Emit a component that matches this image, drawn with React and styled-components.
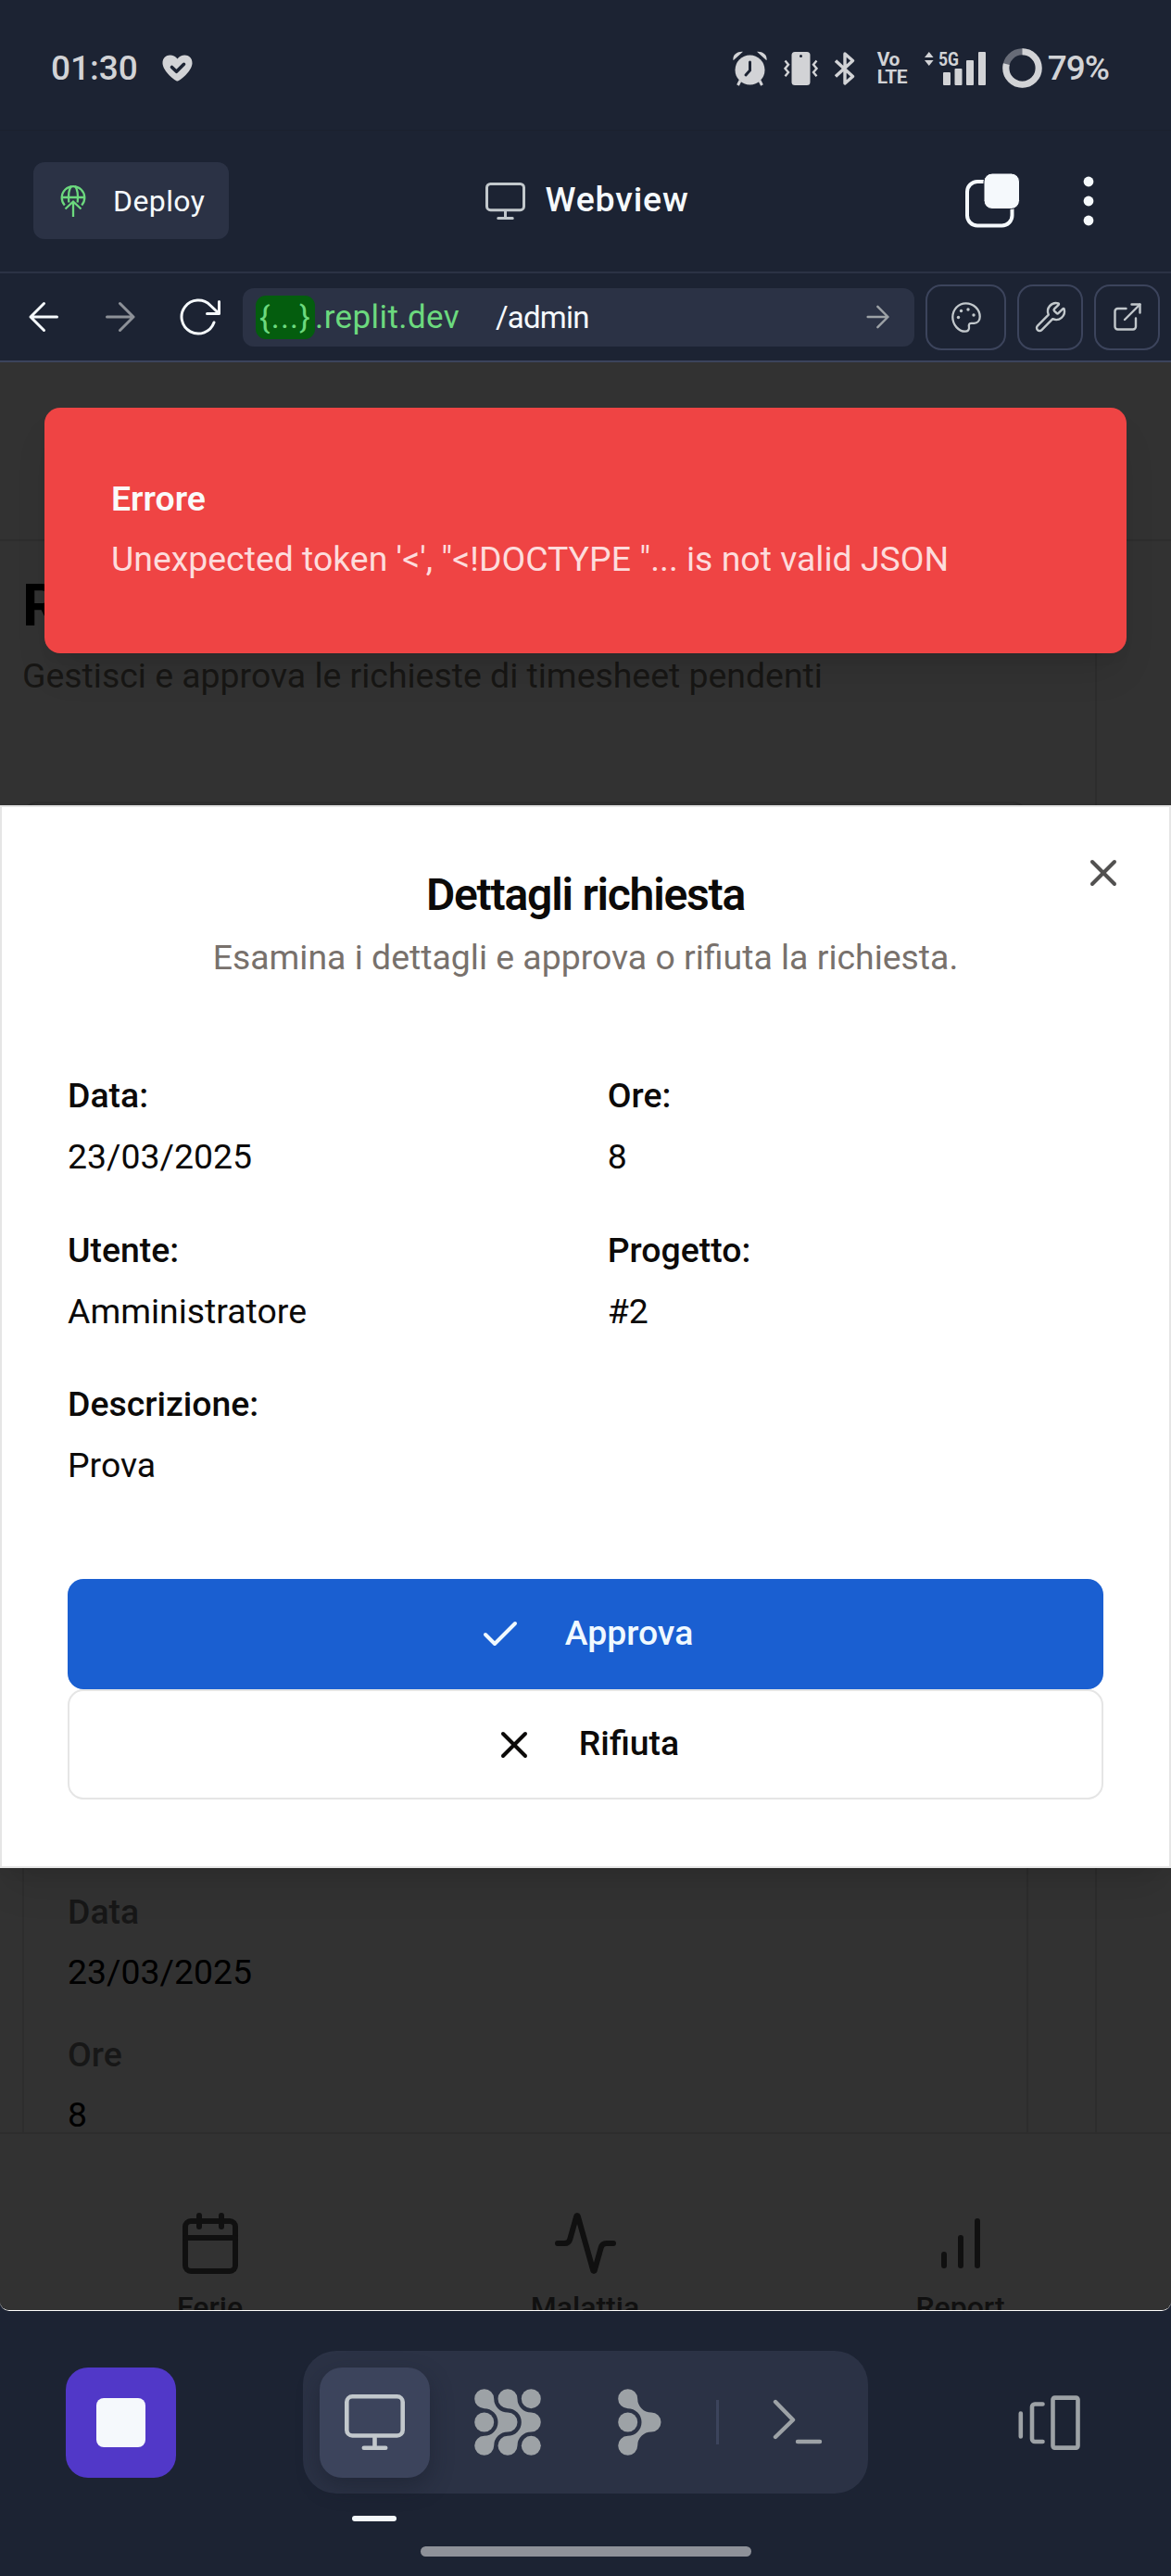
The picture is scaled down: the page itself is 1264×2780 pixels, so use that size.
import React from "react";
import styled, { createGlobalStyle, css } from "styled-components";
import { Wrench, ExternalLink, X, Check, Calendar, Activity } from "lucide-react";

const c = {
  bg: "#1c2333",
  surface: "#2b3245",
  raised: "#3c445c",
  text: "#f5f9fc",
  dim: "#c2c8cc",
  dimmer: "#9da2a6",
  status: "#d2d3d6",
  green: "#6cd97e",
  page: "#323232",
  pageLine: "#2d2d2d",
};

const GlobalStyle = createGlobalStyle`
  *, *::before, *::after { box-sizing: border-box; }
  body { margin: 0; background: ${c.bg}; font-family: Roboto, "Liberation Sans", sans-serif; }
  svg { display: block; flex: none; }
  h1, h2, p, dl, dt, dd { margin: 0; font-weight: 400; }
  button { font: inherit; margin: 0; padding: 0; border: 0; background: none; color: inherit; }
`;

const Screen = styled.div`
  width: 1264px;
  height: 2780px;
  display: flex;
  flex-direction: column;
  background: ${c.bg};
  overflow: hidden;
`;

/* ---------- system status bar ---------- */

const StatusBar = styled.div`
  height: 141px;
  padding: 7px 67px 0 55px;
  border-bottom: 1px solid #1a202e;
  display: flex;
  align-items: center;
  justify-content: space-between;
  color: ${c.status};
`;

const StatusGroup = styled.div`
  display: flex;
  align-items: center;
  gap: ${(p) => p.$gap || 0}px;
`;

const StatusText = styled.span`
  font-size: 37px;
  line-height: 44px;
  font-weight: 500;
  letter-spacing: ${(p) => p.$track || 0}px;
`;

const NetworkLabel = styled.span`
  display: flex;
  flex-direction: column;
  width: 33px;
  font-size: 21px;
  line-height: 19px;
  font-weight: 700;
  letter-spacing: -0.5px;
`;

/* ---------- app header ---------- */

const Header = styled.header`
  height: 154px;
  padding: 0 34px 1px 36px;
  border-bottom: 2px solid ${c.surface};
  display: grid;
  grid-template-columns: 1fr auto 1fr;
  align-items: center;
`;

const DeployButton = styled.button`
  justify-self: start;
  width: 211px;
  height: 83px;
  padding-left: 29px;
  border-radius: 12px;
  background: ${c.surface};
  color: ${c.text};
  display: flex;
  align-items: center;
  gap: 29px;
  font-size: 32px;
  letter-spacing: 0.4px;
`;

const HeaderTitle = styled.div`
  display: flex;
  align-items: center;
  gap: 21px;
  margin-right: -2px;
  color: ${c.text};
  font-size: 37.5px;
  font-weight: 500;
  letter-spacing: 0.8px;
`;

const TitleText = styled.span`
  margin-bottom: 4px;
`;

const HeaderActions = styled.div`
  justify-self: end;
  display: flex;
  align-items: center;
  gap: 68px;
  margin-right: 49px;
`;

/* ---------- address bar ---------- */

const AddressBar = styled.div`
  height: 96px;
  padding: 0 12px 0 30px;
  border-bottom: 2px solid ${c.raised};
  display: flex;
  align-items: center;
`;

const NavButtons = styled.div`
  display: flex;
  align-items: center;
  gap: 48px;
  margin-right: 23px;
`;

const UrlField = styled.div`
  width: 726px;
  height: 63px;
  padding: 0 27px 0 14px;
  border-radius: 12px;
  background: ${c.surface};
  display: flex;
  align-items: center;
  font-size: 35px;
  color: ${c.text};
`;

const HostBadge = styled.span`
  width: 64px;
  height: 47px;
  border-radius: 11px;
  background: #045d0e;
  color: ${c.green};
  display: flex;
  align-items: center;
  justify-content: center;
  font-size: 34px;
  letter-spacing: 1.2px;
`;

const Host = styled.span`
  color: ${c.green};
  width: 195px;
  letter-spacing: 0.4px;
`;

const Path = styled.span`
  flex: 1;
  font-size: 33px;
  letter-spacing: -0.8px;
`;

const ToolButtons = styled.div`
  display: flex;
  gap: 12px;
  margin-left: 12px;
  color: ${c.dim};
`;

const ToolButton = styled.button`
  width: ${(p) => p.$w || 71}px;
  height: 71px;
  border: 2px solid ${c.raised};
  border-radius: 17px;
  display: flex;
  align-items: center;
  justify-content: center;
`;

/* ---------- web page under the modal ---------- */

const Viewport = styled.main`
  position: relative;
  height: 2103px;
  background: ${c.page};
  border-bottom: 1px solid #ffffff;
  border-radius: 0 0 10px 10px;
  overflow: hidden;
  color: #000;
`;

const PageHeader = styled.div`
  height: 193px;
  border-bottom: 2px solid ${c.pageLine};
`;

const PageBody = styled.div`
  height: 1717px;
  width: 1184px;
  padding: 34px 72px 0 24px;
  border-right: 2px solid ${c.pageLine};
  overflow: hidden;
  display: flex;
  flex-direction: column;
`;

const PageTitle = styled.h1`
  font-size: 63px;
  line-height: 72px;
  font-weight: 700;
`;

const PageSubtitle = styled.p`
  margin-top: 13px;
  font-size: 37.4px;
  line-height: 53px;
  color: #171614;
  white-space: nowrap;
`;

const RequestCard = styled.div`
  flex: 1;
  margin-top: 109px;
  padding: 1170px 0 0 47px;
  border: 2px solid ${c.pageLine};
  border-bottom: 0;
  border-radius: 17px 17px 0 0;
  font-size: 37.4px;
  line-height: 53px;
`;

const CardEntry = styled.dl`
  margin-bottom: 36px;
  dt { color: #171717; font-weight: 500; margin-bottom: 12px; }
  dd { color: #000; }
`;

const BottomNav = styled.nav`
  height: 192px;
  padding: 82px 24px 0;
  border-top: 2px solid ${c.pageLine};
  background: ${c.page};
  display: grid;
  grid-template-columns: repeat(3, 405px);
  color: #101010;
`;

const NavItem = styled.div`
  display: flex;
  flex-direction: column;
  align-items: center;
  gap: 12px;
  font-size: 32px;
  line-height: 42px;
  font-weight: 500;
`;

/* ---------- overlays ---------- */

const Toast = styled.div`
  position: absolute;
  top: 49px;
  left: 48px;
  width: 1168px;
  height: 265px;
  padding: 72px 72px 0;
  border-radius: 17px;
  background: #ef4444;
  color: #fafafa;
  box-shadow: 0 26px 40px -8px rgba(0, 0, 0, 0.1), 0 10px 16px -10px rgba(0, 0, 0, 0.1);
  font-size: 37.4px;
  line-height: 53px;
  z-index: 2;
`;

const ToastTitle = styled.p`
  font-weight: 600;
  margin-bottom: 12px;
`;

const ToastMessage = styled.p`
  color: #fddcdc;
  white-space: nowrap;
`;

const Dialog = styled.section`
  position: absolute;
  top: 478px;
  left: 0;
  width: 1264px;
  height: 1147px;
  padding: 71px;
  border: 2px solid #e5e5e5;
  background: #fff;
  color: #0c0a09;
  box-shadow: 0 26px 40px -8px rgba(0, 0, 0, 0.1), 0 10px 16px -10px rgba(0, 0, 0, 0.1);
  font-size: 37.4px;
  line-height: 53px;
  display: flex;
  flex-direction: column;
`;

const CloseButton = styled.button`
  position: absolute;
  top: 47px;
  right: 47px;
  color: #525150;
`;

const DialogTitle = styled.h2`
  font-size: 48px;
  line-height: 47px;
  font-weight: 600;
  letter-spacing: -1.2px;
  text-align: center;
`;

const DialogText = styled.p`
  margin-top: 18px;
  color: #78716c;
  text-align: center;
`;

const Fields = styled.dl`
  margin-top: 96px;
  display: grid;
  grid-template-columns: 1fr 1fr;
  gap: 47.5px;
`;

const Field = styled.div`
  dt { font-weight: 500; margin-bottom: 13px; }
`;

const Actions = styled.div`
  margin-top: 96px;
`;

const ActionButton = styled.button`
  width: 100%;
  height: 119px;
  border-radius: 17px;
  display: flex;
  align-items: center;
  justify-content: center;
  gap: 46px;
  font-weight: 500;
  ${(p) =>
    p.$primary
      ? css`background: #1a5fd1; color: #f0f9ff;`
      : css`border: 2px solid #e5e5e5; color: #0c0a09;`}
`;

const ActionLabel = styled.span`
  margin-bottom: 3px;
`;

/* ---------- workspace dock ---------- */

const Dock = styled.footer`
  flex: 1;
  padding: 43px 71px 0;
  display: flex;
  flex-direction: column;
  align-items: stretch;
`;

const DockRow = styled.div`
  display: flex;
  align-items: center;
  height: 154px;
`;

const StopButton = styled.button`
  width: 119px;
  height: 119px;
  border-radius: 24px;
  background: #5138c8;
  display: flex;
  align-items: center;
  justify-content: center;
  &::before {
    content: "";
    width: 53px;
    height: 53px;
    border-radius: 8px;
    background: ${c.text};
  }
`;

const Tabs = styled.div`
  width: 610px;
  height: 154px;
  margin-left: 137px;
  padding-left: 18px;
  border-radius: 36px;
  background: ${c.surface};
  display: flex;
  align-items: center;
  color: ${c.dimmer};
`;

const Tab = styled.button`
  width: ${(p) => p.$w}px;
  height: 119px;
  border-radius: 24px;
  display: flex;
  align-items: center;
  justify-content: center;
  ${(p) =>
    p.$active &&
    css`
      background: ${c.raised};
      color: ${c.dim};
      box-shadow: 0 10px 24px rgba(20, 24, 38, 0.4);
    `}
`;

const Divider = styled.span`
  width: 3px;
  height: 48px;
  margin: 0 25px 0 24px;
  background: ${c.raised};
`;

const SwitcherButton = styled.button`
  margin-left: 162px;
  color: ${c.dimmer};
`;

const ActiveMark = styled.span`
  width: 48px;
  height: 6px;
  margin: 24px 0 0 309px;
  border-radius: 3px;
  background: ${c.text};
`;

const HomeHandle = styled.span`
  width: 357px;
  height: 11px;
  margin: 27px auto 0;
  border-radius: 6px;
  background: #8e9199;
`;

/* ---------- drawings ---------- */

const HeartCheck = () => (
  <svg width="33" height="29" viewBox="0 0 33 29">
    <path d="M16.5 28.5C14 28.5 1 18 .5 9.500C.2 3.500 4.500.5 8.500.5c3.200 0 6 1.500 8 4 2-2.500 4.800-4 8-4 4 0 8.300 3 8 9C32 18 19 28.500 16.500 28.500z" fill="currentColor" />
    <path d="M10.500 13.500l5 4.800 8-8" fill="none" stroke={c.bg} strokeWidth="3.600" strokeLinecap="round" strokeLinejoin="round" />
  </svg>
);

const Alarm = () => (
  <svg width="37" height="38" viewBox="0 0 37 38" fill="currentColor">
    <circle cx="18.500" cy="20.500" r="16" />
    <path d="M.5 10C-.5 4 5 .2 11 .8L.8 10zM36.500 10C37.500 4 32 .2 26 .8l10.200 9.200z" />
    <path d="M8 32l-2.500 5M29 32l2.500 5" stroke="currentColor" strokeWidth="3" />
    <path d="M18.500 12v9l-4.500 5" fill="none" stroke={c.bg} strokeWidth="3" strokeLinecap="round" />
  </svg>
);

const Vibrate = () => (
  <svg width="37" height="36" viewBox="0 0 37 36">
    <rect x="8.500" y="0" width="20" height="36" rx="3.500" fill="currentColor" />
    <circle cx="18.500" cy="4.500" r="1.500" fill={c.bg} />
    <path d="M1.500 9.500l3.500 4.200-3.500 4.200 3.500 4.200-3.500 4.200M35.500 9.500L32 13.700l3.500 4.200-3.500 4.200 3.500 4.200" fill="none" stroke="currentColor" strokeWidth="2.400" />
  </svg>
);

const Bluetooth = () => (
  <svg width="22" height="36" viewBox="0 0 22 36" fill="none" stroke="currentColor" strokeWidth="3.400">
    <path d="M1 9.500l18.500 17-8.500 7.500V2l8.500 7.500L1 26.500" strokeLinejoin="round" />
  </svg>
);

const SignalBox = styled.svg`
  overflow: visible;
`;

const Signal = () => (
  <SignalBox width="66" height="38" viewBox="0 0 66 38" fill="currentColor">
    <path d="M0 7l4.800-6 4.800 6zM0 10l4.800 6 4.800-6z" />
    <rect x="20" y="23" width="8" height="14" rx="1" />
    <rect x="32.500" y="19" width="8" height="18" rx="1" />
    <rect x="45" y="10" width="8" height="27" rx="1" />
    <rect x="58" y="1" width="8" height="36" rx="1" />
    <text x="15" y="16" fontSize="21" fontWeight="700" textLength="22" lengthAdjust="spacingAndGlyphs">5G</text>
  </SignalBox>
);

const BatteryRing = () => (
  <svg width="43" height="43" viewBox="0 0 43 43" fill="none" strokeWidth="7">
    <circle cx="21.500" cy="21.500" r="17.700" stroke="#676b77" />
    <circle cx="21.500" cy="21.500" r="17.700" stroke="currentColor" pathLength="100" strokeDasharray="79 21" transform="rotate(-90 21.500 21.500)" />
  </svg>
);

const GlobeUp = () => (
  <svg width="28" height="36" viewBox="0 0 28 36" fill="none" stroke={c.green} strokeWidth="2.300">
    <path d="M4.800 22.500A12.300 12.300 0 1 1 23.200 22.500" />
    <path d="M2 14h24M9.300 19.500C8.500 12 9.500 5 12 1.800M18.700 19.500C19.500 12 18.500 5 16 1.800" />
    <path d="M14 35V18.500M5.500 26.500L14 18.500l8.500 8" />
  </svg>
);

const Monitor = ({ w, h, s }) => (
  <svg width={w} height={h} viewBox={`0 0 ${w} ${h}`} fill="none" stroke={c.dim} strokeWidth={s} strokeLinecap="round">
    <rect x={s / 2} y={s / 2} width={w - s} height={h * 0.78 - s} rx={h * 0.1} />
    <path d={`M${w / 2} ${h * 0.78}V${h - s / 2}M${w * 0.32} ${h - s / 2}H${w * 0.68}`} />
  </svg>
);

const Windows = () => (
  <svg width="60" height="59" viewBox="0 0 60 59">
    <rect x="3" y="9" width="48.500" height="47.500" rx="11" fill="none" stroke={c.text} strokeWidth="4" />
    <rect x="21" y="0" width="38.500" height="38.500" rx="9" fill={c.text} stroke={c.bg} strokeWidth="1" />
  </svg>
);

const Dots = () => (
  <svg width="12" height="54" viewBox="0 0 12 54" fill={c.text}>
    <circle cx="6" cy="6" r="5.400" />
    <circle cx="6" cy="27" r="5.400" />
    <circle cx="6" cy="48" r="5.400" />
  </svg>
);

const Arrow = ({ w = 34, h = 34, s = 3, color = c.text, back }) => (
  <svg width={w} height={h} viewBox="0 0 34 34" fill="none" stroke={color} strokeWidth={s} strokeLinecap="round" strokeLinejoin="round">
    <path d={back ? "M31.500 17H3M17.500 2.500L3 17l14.500 14.500" : "M3.500 17H32M17.500 2.500L32 17 17.500 31.500"} />
  </svg>
);

const Reload = () => (
  <svg width="45" height="42" viewBox="0 0 45 42" fill="none" stroke={c.text} strokeWidth="3" strokeLinecap="round" strokeLinejoin="round">
    <path d="M37 27A18 18 0 1 1 33 8.500L42 17" />
    <path d="M42.500 4.500v13H29.500" />
  </svg>
);

const Palette = () => (
  <svg width="32" height="33" viewBox="0 0 32 33" fill="none" stroke="currentColor" strokeWidth="2.300">
    <path d="M15.500 1.300C7.500 1.300 1.300 8 1.300 16.300S7.800 31.700 14.800 31.700c3 0 4.600-2 4.200-4.600-.5-2.200-.1-4.300 2.200-4.300h3.300c3.600 0 6.200-3 6.200-7C30.700 8 24 1.300 15.500 1.300z" />
    <g fill="currentColor" stroke="none">
      <circle cx="7.500" cy="16.500" r="1.700" />
      <circle cx="10.500" cy="9.500" r="1.700" />
      <circle cx="18" cy="8" r="1.700" />
      <circle cx="24" cy="14" r="1.700" />
    </g>
  </svg>
);

const LINK =
  "M10.700.2A10.500 10.500 0 0 1 21.200 10.700A14.800 14.800 0 0 0 36 25.500A10.500 10.500 0 0 1 36 46.500A14.800 14.800 0 0 0 21.200 61.300A10.500 10.500 0 1 1 10.700 50.800A14.800 14.800 0 0 0 25.500 36A14.800 14.800 0 0 0 10.700 21.200A10.500 10.500 0 0 1 10.700.2z";

const AgentGrid = () => (
  <svg width="72" height="72" viewBox="0 0 72 72" fill="currentColor">
    <path d={LINK} />
    <path d={LINK} transform="translate(25.300 0)" />
    <circle cx="10.700" cy="36" r="10.500" />
    <circle cx="61.300" cy="10.700" r="10.500" />
    <circle cx="61.300" cy="61.300" r="10.500" />
  </svg>
);

const AssistantMark = () => (
  <svg width="47" height="72" viewBox="0 0 47 72" fill="currentColor">
    <path d={LINK} />
    <circle cx="10.700" cy="36" r="10.500" />
  </svg>
);

const Prompt = () => (
  <svg width="54" height="50" viewBox="0 0 54 50" fill="none" stroke="currentColor" strokeWidth="4.400" strokeLinecap="round" strokeLinejoin="round">
    <path d="M3 3l19 19.500L3 41M27 46h24" />
  </svg>
);

const Switcher = () => (
  <svg width="67" height="59" viewBox="0 0 67 59" fill="none" stroke="currentColor" strokeWidth="4.600" strokeLinecap="round" strokeLinejoin="round">
    <rect x="37.500" y="2.600" width="27" height="54" rx="2" />
    <path d="M26.500 9.500H18a3 3 0 0 0-3 3v34.500a3 3 0 0 0 3 3h8.500M2.800 19.500v25" />
  </svg>
);

const Bars = () => (
  <svg width="72" height="72" viewBox="0 0 24 24" fill="none" stroke="currentColor" strokeWidth="2" strokeLinecap="round">
    <path d="M12 20V10M18 20V4M6 20v-4" />
  </svg>
);

const fields = [
  ["Data:", "23/03/2025"],
  ["Ore:", "8"],
  ["Utente:", "Amministratore"],
  ["Progetto:", "#2"],
  ["Descrizione:", "Prova"],
];

export default function App() {
  return (
    <Screen>
      <GlobalStyle />
      <StatusBar>
        <StatusGroup $gap={26}>
          <StatusText>01:30</StatusText>
          <HeartCheck />
        </StatusGroup>
        <StatusGroup $gap={18}>
          <Alarm />
          <Vibrate />
          <StatusGroup $gap={24}>
            <Bluetooth />
            <NetworkLabel>
              <span>Vo</span>
              <span>LTE</span>
            </NetworkLabel>
          </StatusGroup>
          <Signal />
          <StatusGroup $gap={6}>
            <BatteryRing />
            <StatusText $track={-1}>79%</StatusText>
          </StatusGroup>
        </StatusGroup>
      </StatusBar>

      <Header>
        <DeployButton>
          <GlobeUp />
          Deploy
        </DeployButton>
        <HeaderTitle>
          <Monitor w={43} h={40} s={3} />
          <TitleText>Webview</TitleText>
        </HeaderTitle>
        <HeaderActions>
          <Windows />
          <Dots />
        </HeaderActions>
      </Header>

      <AddressBar>
        <NavButtons>
          <Arrow back />
          <Arrow color="#8d9198" />
          <Reload />
        </NavButtons>
        <UrlField>
          <HostBadge>{"{...}"}</HostBadge>
          <Host>.replit.dev</Host>
          <Path>/admin</Path>
          <Arrow w={26} h={26} s={3.200} color={c.dimmer} />
        </UrlField>
        <ToolButtons>
          <ToolButton $w={87}>
            <Palette />
          </ToolButton>
          <ToolButton>
            <Wrench size={36} strokeWidth={1.600} />
          </ToolButton>
          <ToolButton>
            <ExternalLink size={36} strokeWidth={1.600} />
          </ToolButton>
        </ToolButtons>
      </AddressBar>

      <Viewport>
        <PageHeader />
        <PageBody>
          <PageTitle>R</PageTitle>
          <PageSubtitle>Gestisci e approva le richieste di timesheet pendenti</PageSubtitle>
          <RequestCard>
            <CardEntry>
              <dt>Data</dt>
              <dd>23/03/2025</dd>
            </CardEntry>
            <CardEntry>
              <dt>Ore</dt>
              <dd>8</dd>
            </CardEntry>
          </RequestCard>
        </PageBody>
        <BottomNav>
          <NavItem>
            <Calendar size={72} />
            Ferie
          </NavItem>
          <NavItem>
            <Activity size={72} />
            Malattia
          </NavItem>
          <NavItem>
            <Bars />
            Report
          </NavItem>
        </BottomNav>

        <Dialog>
          <CloseButton>
            <X size={48} strokeWidth={2} />
          </CloseButton>
          <DialogTitle>Dettagli richiesta</DialogTitle>
          <DialogText>Esamina i dettagli e approva o rifiuta la richiesta.</DialogText>
          <Fields>
            {fields.map(([label, value]) => (
              <Field key={label}>
                <dt>{label}</dt>
                <dd>{value}</dd>
              </Field>
            ))}
          </Fields>
          <Actions>
            <ActionButton $primary>
              <Check size={48} strokeWidth={2} />
              <ActionLabel>Approva</ActionLabel>
            </ActionButton>
            <ActionButton>
              <X size={48} strokeWidth={2} />
              <ActionLabel>Rifiuta</ActionLabel>
            </ActionButton>
          </Actions>
        </Dialog>

        <Toast>
          <ToastTitle>Errore</ToastTitle>
          <ToastMessage>{`Unexpected token '<', "<!DOCTYPE "... is not valid JSON`}</ToastMessage>
        </Toast>
      </Viewport>

      <Dock>
        <DockRow>
          <StopButton />
          <Tabs>
            <Tab $w={119} $active>
              <Monitor w={65} h={60} s={4.600} />
            </Tab>
            <Tab $w={167}>
              <AgentGrid />
            </Tab>
            <Tab $w={118}>
              <AssistantMark />
            </Tab>
            <Divider />
            <Tab $w={119}>
              <Prompt />
            </Tab>
          </Tabs>
          <SwitcherButton>
            <Switcher />
          </SwitcherButton>
        </DockRow>
        <ActiveMark />
        <HomeHandle />
      </Dock>
    </Screen>
  );
}
